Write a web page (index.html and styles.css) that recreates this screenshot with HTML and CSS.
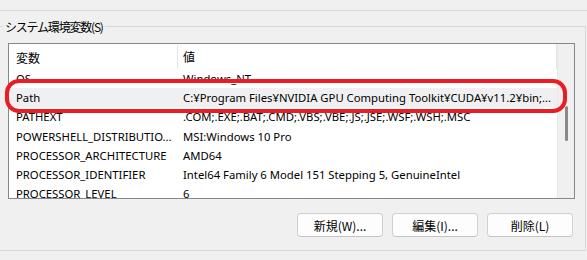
FILE: index.html
```html
<!DOCTYPE html>
<html lang="ja">
<head>
  <meta charset="UTF-8" />
  <title>システム環境変数</title>
  <link rel="stylesheet" href="styles.css">
</head>
<body>
  <div class="top-rule"></div>
  <fieldset class="group">
    <legend>システム環境変数(S)</legend>
    <div class="list">
      <div class="list-main">
        <div class="row header">
          <div class="cell name">変数</div>
          <div class="cell value">値</div>
        </div>
        <div class="row"><div class="cell name">OS</div><div class="cell value">Windows_NT</div></div>
        <div class="row selected"><div class="cell name">Path</div><div class="cell value">C:¥Program Files¥NVIDIA GPU Computing Toolkit¥CUDA¥v11.2¥bin;...</div></div>
        <div class="row"><div class="cell name">PATHEXT</div><div class="cell value">.COM;.EXE;.BAT;.CMD;.VBS;.VBE;.JS;.JSE;.WSF;.WSH;.MSC</div></div>
        <div class="row"><div class="cell name">POWERSHELL_DISTRIBUTIO...</div><div class="cell value">MSI:Windows 10 Pro</div></div>
        <div class="row"><div class="cell name">PROCESSOR_ARCHITECTURE</div><div class="cell value">AMD64</div></div>
        <div class="row"><div class="cell name">PROCESSOR_IDENTIFIER</div><div class="cell value">Intel64 Family 6 Model 151 Stepping 5, GenuineIntel</div></div>
        <div class="row"><div class="cell name">PROCESSOR_LEVEL</div><div class="cell value">6</div></div>
      </div>
      <div class="scroll-track"><div class="scroll-thumb"></div></div>
    </div>
    <div class="buttons">
      <button>新規(W)...</button>
      <button>編集(I)...</button>
      <button>削除(L)</button>
    </div>
  </fieldset>
  <div class="highlight"></div>
</body>
</html>
```

FILE: styles.css
```css
* {
  box-sizing: border-box;
}

body {
  margin: 0;
  width: 587px;
  height: 260px;
  overflow: hidden;
  position: relative;
  background: #f0f0f0;
  color: #000;
  font-family: "Noto Sans", "Noto Sans CJK JP", sans-serif;
  font-size: 12px;
}

.top-rule {
  height: 11px;
  border-bottom: 1px solid #dadada;
}

.group {
  margin: 7px 1px 0 -4px;
  padding: 0 0 13px 0;
  border: 1px solid #d9d9d9;
  border-left-color: transparent;
  min-width: 0;
}

.group legend {
  margin-left: 6px;
  padding: 0 2px;
  font-family: "Noto Sans CJK JP", sans-serif;
  letter-spacing: -1.2px;
  line-height: 17px;
}

.list {
  margin: 8px 0 0 11px;
  width: 567px;
  height: 156px;
  border: 1px solid #828790;
  background: #fff;
  display: flex;
  overflow: hidden;
}

.list-main {
  flex: 1;
  min-width: 0;
}

.row {
  display: flex;
  height: 19.2px;
  align-items: center;
  white-space: nowrap;
  font-size: 11.3px;
}

.row.header {
  height: 25px;
  align-items: stretch;
  border-right: 1px solid #e5e5e5;
  font-size: 12px;
}

.row.header .cell {
  display: flex;
  align-items: center;
  font-family: "Noto Sans CJK JP", sans-serif;
}

.row.selected {
  background: #f0f0f0;
}

.cell.name {
  width: 169px;
  padding-left: 7px;
  flex-shrink: 0;
}

.row.header .cell.name {
  border-right: 1px solid #e5e5e5;
  margin: 1px 0 0;
}

.cell.value {
  padding-left: 5px;
}

.scroll-track {
  width: 17px;
  background: #f0f0f0;
  border-left: 1px solid #e8e8e8;
  padding: 62px 0 0 7px;
}

.scroll-thumb {
  width: 3px;
  height: 35px;
  border-radius: 2px;
  background: #8a8a8a;
}

.buttons {
  display: flex;
  justify-content: flex-end;
  gap: 9px;
  margin: 14px 12px 0 0;
}

.buttons button {
  width: 86px;
  height: 24px;
  padding: 0;
  background: #fdfdfd;
  border: 1px solid #d0d0d0;
  border-bottom-color: #c4c4c4;
  border-radius: 4px;
  font-family: "Noto Sans CJK JP", sans-serif;
  font-size: 12px;
  color: #000;
}

/* annotation drawn over the Path row */
.highlight {
  position: absolute;
  left: 5px;
  top: 79px;
  width: 562px;
  height: 34px;
  border: 4px solid #ec1c24;
  border-radius: 14px;
}
```
